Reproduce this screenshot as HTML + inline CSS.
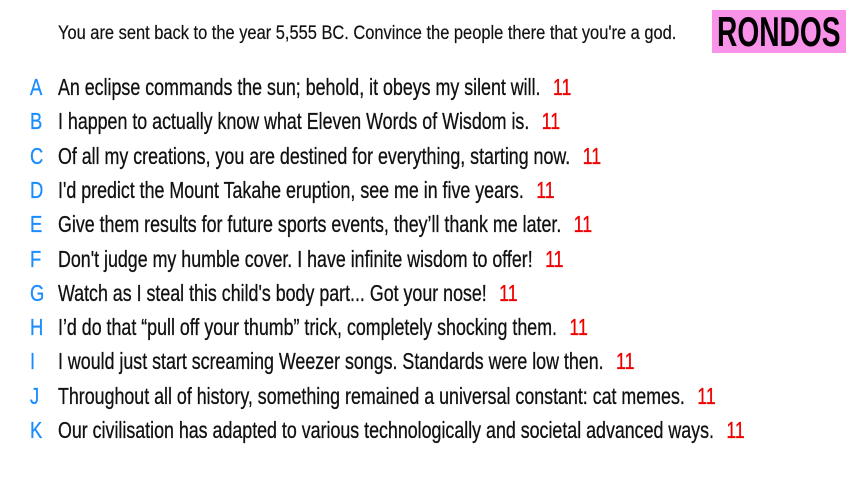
<!DOCTYPE html>
<html><head><style>
body{margin:0;width:853px;height:480px;background:#fff;overflow:hidden;position:relative;font-family:"Liberation Sans",sans-serif;color:#111;}
.h{position:absolute;left:58px;top:23px;font-size:19px;white-space:nowrap;transform:scaleX(0.865);transform-origin:0 0;-webkit-text-stroke:0.2px #111;}
.logo{position:absolute;left:712px;top:10px;width:134px;height:43px;background:#f993ea;}
.logo div{position:absolute;left:5px;top:0;font-size:42px;line-height:43px;font-weight:bold;color:#000;white-space:nowrap;transform:scaleX(0.67);transform-origin:0 0;}
.r{position:absolute;left:0;font-size:23px;white-space:nowrap;height:30px;line-height:30px;}
.r b{position:absolute;left:30px;color:#1a8cff;font-weight:normal;transform:scaleX(0.8);transform-origin:0 0;-webkit-text-stroke:0.3px #1a8cff;}
.r span{position:absolute;left:58px;transform:scaleX(0.775);transform-origin:0 0;-webkit-text-stroke:0.3px #111;}
.r i{font-style:normal;color:#e00;margin-left:16px;-webkit-text-stroke:0.3px #e00;}
</style></head><body>
<div class="h">You are sent back to the year 5,555 BC. Convince the people there that you're a god.</div>
<div class="logo"><div>RONDOS</div></div>
<div class="r" style="top:72px"><b>A</b><span>An eclipse commands the sun; behold, it obeys my silent will.<i>11</i></span></div>
<div class="r" style="top:106px"><b>B</b><span>I happen to actually know what Eleven Words of Wisdom is.<i>11</i></span></div>
<div class="r" style="top:141px"><b>C</b><span>Of all my creations, you are destined for everything, starting now.<i>11</i></span></div>
<div class="r" style="top:175px"><b>D</b><span>I'd predict the Mount Takahe eruption, see me in five years.<i>11</i></span></div>
<div class="r" style="top:209px"><b>E</b><span>Give them results for future sports events, they’ll thank me later.<i>11</i></span></div>
<div class="r" style="top:244px"><b>F</b><span>Don't judge my humble cover. I have infinite wisdom to offer!<i>11</i></span></div>
<div class="r" style="top:278px"><b>G</b><span>Watch as I steal this child's body part... Got your nose!<i>11</i></span></div>
<div class="r" style="top:312px"><b>H</b><span>I’d do that “pull off your thumb” trick, completely shocking them.<i>11</i></span></div>
<div class="r" style="top:346px"><b>I</b><span>I would just start screaming Weezer songs. Standards were low then.<i>11</i></span></div>
<div class="r" style="top:381px"><b>J</b><span>Throughout all of history, something remained a universal constant: cat memes.<i>11</i></span></div>
<div class="r" style="top:415px"><b>K</b><span>Our civilisation has adapted to various technologically and societal advanced ways.<i>11</i></span></div>
</body></html>
